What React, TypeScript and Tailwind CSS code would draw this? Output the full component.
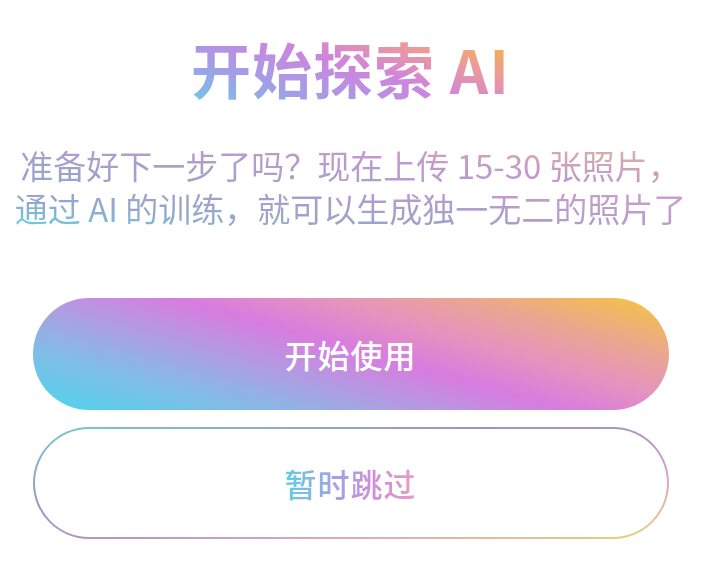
const cjk = '"Noto Sans CJK SC", "Noto Sans", sans-serif'

export default function App() {
  return (
    <div className="w-[701px] h-[573px] bg-white flex flex-col items-center" style={{ fontFamily: cjk }}>
      <h1 className="mt-[28px] text-[60px] leading-[80px] font-bold tracking-[1px] bg-[linear-gradient(18deg,#6ecbe8_0%,#9fa0e6_25%,#cf84de_52%,#ec9a9a_72%,#f2ad5a_86%,#f3bf3c_100%)] bg-clip-text text-transparent">
        开始探索 AI
      </h1>

      <div className="mt-[36px] w-[701px] flex flex-col items-center text-[33px] leading-[43px] whitespace-nowrap">
        <p className="bg-[linear-gradient(6deg,#8fa6d0_0%,#a8a0cc_30%,#c498cc_60%,#d6aab0_82%,#ddbc92_100%)] bg-clip-text text-transparent">
          准备好下一步了吗？现在上传 15-30 张照片，
        </p>
        <p className="bg-[linear-gradient(6deg,#5fd3e2_0%,#93a8cc_28%,#ab9ecb_55%,#c49ccc_78%,#cca4cc_100%)] bg-clip-text text-transparent">
          通过 AI 的训练，就可以生成独一无二的照片了
        </p>
      </div>

      <button className="mt-[68px] w-[636px] h-[112px] rounded-full flex items-center justify-center text-white text-[32px] font-medium tracking-[1px] bg-[linear-gradient(16deg,#4bd5ec_0%,#84bbe6_22%,#b39ae2_38%,#d87cdf_52%,#e593bf_66%,#eaa690_80%,#f6c63c_100%)]">
        开始使用
      </button>

      <div className="mt-[17px] w-[636px] h-[112px] rounded-full p-[2px] bg-[linear-gradient(to_bottom_right,#76cacc_0%,#a094c4_35%,#b396c4_55%,#d8a8c4_72%,#ead270_100%)]">
        <button className="w-full h-full rounded-full bg-white flex items-center justify-center">
          <span className="text-[32px] font-medium tracking-[1px] bg-[linear-gradient(90deg,#5fcfe6_0%,#a6a0e2_40%,#d28cdc_70%,#e7a0c0_100%)] bg-clip-text text-transparent">
            暂时跳过
          </span>
        </button>
      </div>
    </div>
  )
}
